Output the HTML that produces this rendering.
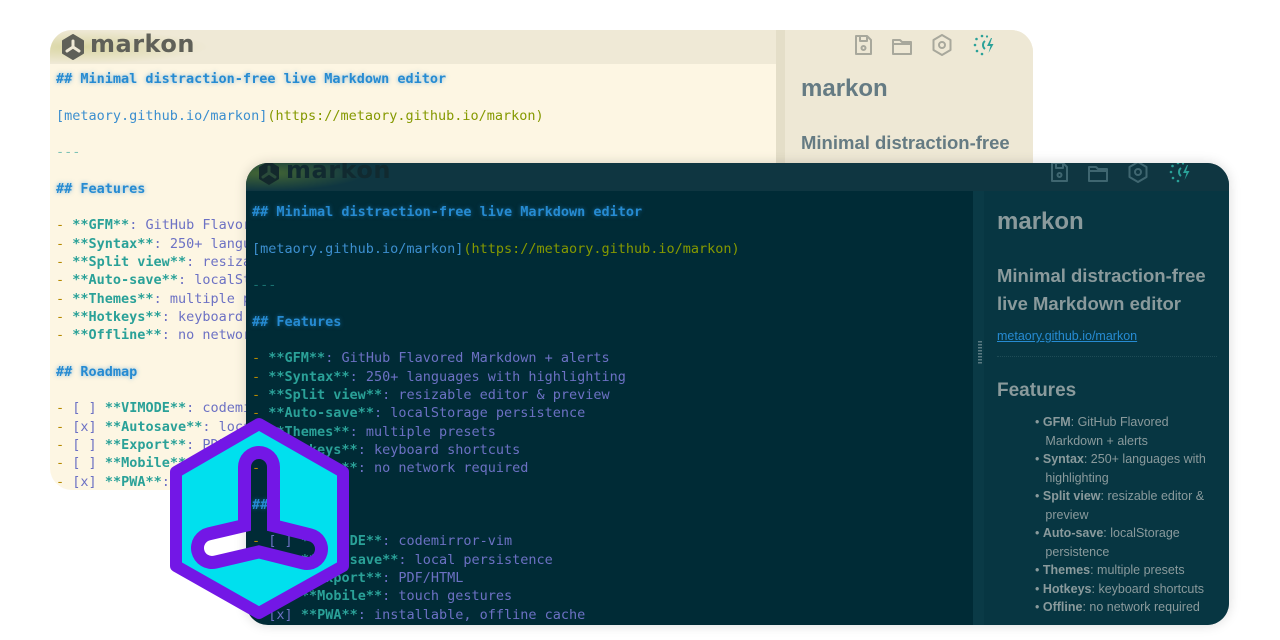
<!DOCTYPE html>
<html><head><meta charset="utf-8"><style>
*{margin:0;padding:0;box-sizing:border-box}
body{width:1280px;height:640px;background:#fff;position:relative;overflow:hidden;font-family:"Liberation Sans",sans-serif}
.win{position:absolute;overflow:hidden;border-radius:22px}
.hdr{position:absolute;left:0;right:0;top:0}
.ed{position:absolute;font-family:"DejaVu Sans Mono","Liberation Mono",monospace;font-size:13.5px;line-height:18.3px;white-space:pre}
.h{color:#268bd2;font-weight:bold;text-shadow:0 0 4px rgba(38,139,210,.55)}
.lk{color:#3c8fcf}.url{color:#859900}.hr{color:#2aa198;opacity:.6}
.d{color:#b58900}.b{color:#2aa198;font-weight:bold}.t{color:#6c71c4}
.pv{position:absolute;top:0;bottom:0}
.logo{position:absolute;font-family:"DejaVu Sans",sans-serif;font-weight:bold;font-size:24px;letter-spacing:.5px}
.ic{position:absolute}
</style></head><body>

<!-- light window -->
<div class="win" style="left:50px;top:30px;width:983px;height:460px;background:#fdf6e3">
  <div class="hdr" style="height:34px;background:#eee8d5;opacity:.95"></div>
  <div style="position:absolute;left:0;top:0;width:160px;height:34px;background:radial-gradient(ellipse at 30px 17px,rgba(190,190,100,.45),rgba(238,232,213,0) 70%)"></div>
  <svg class="ic" style="left:10px;top:3px" width="26" height="28" viewBox="0 0 26 28"><path d="M13 2 L23 8 L23 20 L13 26 L3 20 L3 8Z" fill="#5f6058" stroke="#5f6058" stroke-width="2" stroke-linejoin="round"/><path d="M13 8 V14 L7 18 M13 14 L19 18" stroke="#eee8d5" stroke-width="3" stroke-linecap="round" fill="none"/></svg>
  <div class="logo" style="left:40px;top:0px;color:#5f6058">markon</div>
  <div class="pv" style="left:726px;width:9px;background:#e4dec8"></div>
  <div class="pv" style="left:735px;right:0;background:#eee8d5"></div>
  <div style="position:absolute;left:751px;top:45px;font-size:24px;font-weight:bold;color:#657b83">markon</div>
  <div style="position:absolute;left:751px;top:102px;font-size:18.5px;font-weight:bold;color:#657b83">Minimal distraction-free</div>
  <div class="ed" style="left:6px;top:40px"><span class="h">## Minimal distraction-free live Markdown editor</span>

<span class="lk">[metaory.github.io/markon]</span><span class="url">(https://metaory.github.io/markon)</span>

<span class="hr">---</span>

<span class="h">## Features</span>

<span class="d">-</span> <span class="b">**GFM**</span><span class="t">: GitHub Flavored Markdown + alerts</span>
<span class="d">-</span> <span class="b">**Syntax**</span><span class="t">: 250+ languages with highlighting</span>
<span class="d">-</span> <span class="b">**Split view**</span><span class="t">: resizable editor &amp; preview</span>
<span class="d">-</span> <span class="b">**Auto-save**</span><span class="t">: localStorage persistence</span>
<span class="d">-</span> <span class="b">**Themes**</span><span class="t">: multiple presets</span>
<span class="d">-</span> <span class="b">**Hotkeys**</span><span class="t">: keyboard shortcuts</span>
<span class="d">-</span> <span class="b">**Offline**</span><span class="t">: no network required</span>

<span class="h">## Roadmap</span>

<span class="d">-</span> <span class="t">[ ]</span> <span class="b">**VIMODE**</span><span class="t">: codemirror-vim</span>
<span class="d">-</span> <span class="t">[x]</span> <span class="b">**Autosave**</span><span class="t">: local persistence</span>
<span class="d">-</span> <span class="t">[ ]</span> <span class="b">**Export**</span><span class="t">: PDF/HTML</span>
<span class="d">-</span> <span class="t">[ ]</span> <span class="b">**Mobile**</span><span class="t">: touch gestures</span>
<span class="d">-</span> <span class="t">[x]</span> <span class="b">**PWA**</span><span class="t">: installable, offline cache</span></div>
  <svg class="ic" style="left:802px;top:2px" width="160" height="28" viewBox="0 0 160 28" fill="none" stroke="#a8a89c" stroke-width="2" stroke-linejoin="round">
    <path d="M4 4h11l4 4v14H4Z M8 4v5h7V4"/><circle cx="11.5" cy="16" r="2"/>
    <path d="M41 8h7l2 2h9v12H41Z M41 12h18"/>
    <path d="M90 3l8.5 5v10L90 23l-8.5-5V8Z"/><circle cx="90" cy="13" r="3"/>
    <g stroke="none" fill="#2aa198"><circle cx="130" cy="4" r="1.3"/><circle cx="124.5" cy="7" r="1.3"/><circle cx="123" cy="13" r="1.3"/><circle cx="125" cy="19" r="1.3"/><circle cx="130" cy="22" r="1.3"/><circle cx="135" cy="4.5" r="1.1"/></g>
    <path stroke="#2aa198" d="M133 9a5 5 0 0 0 0 8"/>
    <path stroke="none" fill="#2aa198" d="M139 6l-4 8h3.5l-2 7 5-9h-3.5l2-6Z"/>
  </svg>
</div>

<!-- dark window -->
<div class="win" style="left:246px;top:163px;width:983px;height:462px;background:#002b36;box-shadow:0 0 12px rgba(0,0,0,.15)">
  <div class="hdr" style="height:28px;background:#0f3641"></div>
  <div style="position:absolute;left:0;top:0;width:120px;height:28px;background:radial-gradient(ellipse at 20px 10px,rgba(120,150,40,.5),rgba(15,54,65,0) 70%)"></div>
  <svg class="ic" style="left:10px;top:-4px" width="26" height="28" viewBox="0 0 26 28"><path d="M13 2 L23 8 L23 20 L13 26 L3 20 L3 8Z" fill="#13282c"/><path d="M13 8 V14 L7 18 M13 14 L19 18" stroke="#2a4a3a" stroke-width="3" stroke-linecap="round" fill="none"/></svg>
  <div class="logo" style="left:40px;top:-7px;color:#112a30">markon</div>
  <div class="pv" style="left:727px;top:28px;width:11px;background:#0a3a46"></div>
  <div class="pv" style="left:738px;right:0;top:28px;background:#073642"></div>
  <div style="position:absolute;left:732px;top:178px;width:4px;height:24px;background:repeating-linear-gradient(#5a7a82 0 1.5px,transparent 1.5px 3px)"></div>
  <div style="position:absolute;left:751px;top:45px;font-size:24px;font-weight:bold;color:#8a9a9c">markon</div>
  <div style="position:absolute;left:751px;top:99px;font-size:18.5px;line-height:28px;font-weight:bold;color:#8a9a9c">Minimal distraction-free<br>live Markdown editor</div>
  <div style="position:absolute;left:751px;top:166px;font-size:12.5px;color:#268bd2;text-decoration:underline">metaory.github.io/markon</div>
  <div style="position:absolute;left:751px;right:12px;top:193px;border-top:1px dotted #1e4c56"></div>
  <div style="position:absolute;left:751px;top:217px;font-size:19px;font-weight:bold;color:#8a9a9c">Features</div>
  <ul style="position:absolute;left:789px;top:250px;width:190px;font-size:12.5px;line-height:18.5px;color:#8a9a9c;list-style:none">
    <li>• <b>GFM</b>: GitHub Flavored<br>&nbsp;&nbsp;&nbsp;Markdown + alerts</li>
    <li>• <b>Syntax</b>: 250+ languages with<br>&nbsp;&nbsp;&nbsp;highlighting</li>
    <li>• <b>Split view</b>: resizable editor &amp;<br>&nbsp;&nbsp;&nbsp;preview</li>
    <li>• <b>Auto-save</b>: localStorage<br>&nbsp;&nbsp;&nbsp;persistence</li>
    <li>• <b>Themes</b>: multiple presets</li>
    <li>• <b>Hotkeys</b>: keyboard shortcuts</li>
    <li>• <b>Offline</b>: no network required</li>
  </ul>
  <div class="ed" style="left:6px;top:40px"><span class="h">## Minimal distraction-free live Markdown editor</span>

<span class="lk">[metaory.github.io/markon]</span><span class="url">(https://metaory.github.io/markon)</span>

<span class="hr">---</span>

<span class="h">## Features</span>

<span class="d">-</span> <span class="b">**GFM**</span><span class="t">: GitHub Flavored Markdown + alerts</span>
<span class="d">-</span> <span class="b">**Syntax**</span><span class="t">: 250+ languages with highlighting</span>
<span class="d">-</span> <span class="b">**Split view**</span><span class="t">: resizable editor &amp; preview</span>
<span class="d">-</span> <span class="b">**Auto-save**</span><span class="t">: localStorage persistence</span>
<span class="d">-</span> <span class="b">**Themes**</span><span class="t">: multiple presets</span>
<span class="d">-</span> <span class="b">**Hotkeys**</span><span class="t">: keyboard shortcuts</span>
<span class="d">-</span> <span class="b">**Offline**</span><span class="t">: no network required</span>

<span class="h">## Roadmap</span>

<span class="d">-</span> <span class="t">[ ]</span> <span class="b">**VIMODE**</span><span class="t">: codemirror-vim</span>
<span class="d">-</span> <span class="t">[x]</span> <span class="b">**Autosave**</span><span class="t">: local persistence</span>
<span class="d">-</span> <span class="t">[ ]</span> <span class="b">**Export**</span><span class="t">: PDF/HTML</span>
<span class="d">-</span> <span class="t">[ ]</span> <span class="b">**Mobile**</span><span class="t">: touch gestures</span>
<span class="d">-</span> <span class="t">[x]</span> <span class="b">**PWA**</span><span class="t">: installable, offline cache</span></div>
  <svg class="ic" style="left:802px;top:-4px" width="160" height="28" viewBox="0 0 160 28" fill="none" stroke="#3f6670" stroke-width="2" stroke-linejoin="round">
    <path d="M4 4h11l4 4v14H4Z M8 4v5h7V4"/><circle cx="11.5" cy="16" r="2"/>
    <path d="M41 8h7l2 2h9v12H41Z M41 12h18"/>
    <path d="M90 3l8.5 5v10L90 23l-8.5-5V8Z"/><circle cx="90" cy="13" r="3"/>
    <g stroke="none" fill="#2aa198"><circle cx="130" cy="4" r="1.3"/><circle cx="124.5" cy="7" r="1.3"/><circle cx="123" cy="13" r="1.3"/><circle cx="125" cy="19" r="1.3"/><circle cx="130" cy="22" r="1.3"/><circle cx="135" cy="4.5" r="1.1"/></g>
    <path stroke="#2aa198" d="M133 9a5 5 0 0 0 0 8"/>
    <path stroke="none" fill="#2aa198" d="M139 6l-4 8h3.5l-2 7 5-9h-3.5l2-6Z"/>
  </svg>
</div>

<!-- big logo -->
<svg style="position:absolute;left:0;top:0" width="1280" height="640" viewBox="0 0 1280 640">
  <defs>
    <mask id="m"><rect width="1280" height="640" fill="#fff"/>
      <path d="M259 467 V537 L212 548 M259 537 L307 549" stroke="#000" stroke-width="16" stroke-linecap="round" stroke-linejoin="round" fill="none"/></mask>
  </defs>
  <g mask="url(#m)">
    <path d="M259 424 L343 472 L343 566 L259 613 L176 566 L176 472Z" fill="#00e0ee" stroke="#7317e6" stroke-width="12" stroke-linejoin="round"/>
    <path d="M259 467 V537 L212 548 M259 537 L307 549" stroke="#7317e6" stroke-width="42" stroke-linecap="round" stroke-linejoin="round" fill="none"/>
  </g>
</svg>
</body></html>
